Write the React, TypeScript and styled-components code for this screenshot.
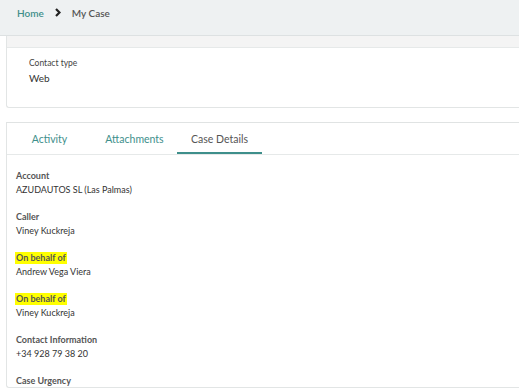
import React from "react";
import styled, { createGlobalStyle } from "styled-components";

const Global = createGlobalStyle`
  html, body { margin: 0; padding: 0; background: #ffffff; overflow: hidden; }
  body { font-family: "Lato", "Noto Sans", sans-serif; color: #333; }
`;

const Page = styled.div`
  width: 519px;
  height: 392px;
  overflow: hidden;
  display: flex;
  flex-direction: column;
`;

const Header = styled.div`
  height: 36px;
  box-sizing: border-box;
  background: #eef1f2;
  border-bottom: 1px solid #dde1e2;
  display: flex;
  align-items: center;
  padding: 0 0 10px 17px;
  gap: 11px;
  font-size: 10px;
  flex-shrink: 0;
`;

const Crumb = styled.span<{ $link?: boolean }>`
  color: ${(p) => (p.$link ? "#3e8f8b" : "#555")};
  font-weight: 600;
`;

const Chevron = styled.svg`
  width: 6px;
  height: 9px;
`;

const Card = styled.div<{ $top?: boolean }>`
  margin-left: 6px;
  width: 600px;
  border-left: 1px solid #e2e5e5;
  border-bottom: 1px solid #e2e5e5;
  border-top: ${(p) => (p.$top ? "1px solid #e0e3e3" : "none")};
  border-radius: 0 0 0 3px;
  background: #fff;
  flex-shrink: 0;
`;

const Strip = styled.div`
  height: 11px;
  background: #f4f4f4;
  border-bottom: 1px solid #e6e9e9;
`;

const CardBody = styled.div`
  height: 59px;
  padding: 9px 0 0 22px;
  box-sizing: border-box;
`;

const SmallLabel = styled.div`
  font-size: 8.5px;
  color: #444;
  line-height: 12px;
`;

const SmallValue = styled.div`
  font-size: 10px;
  color: #333;
  line-height: 12px;
  margin-top: 3px;
`;

const Gap = styled.div`
  height: 14px;
  flex-shrink: 0;
`;

const Tabs = styled.div`
  height: 31px;
  display: flex;
  border-bottom: 1px solid #e6e9e9;
`;

const Tab = styled.div<{ $active?: boolean }>`
  width: 85px;
  display: flex;
  align-items: center;
  justify-content: center;
  font-size: 10.5px;
  color: ${(p) => (p.$active ? "#555" : "#3e8f8b")};
  border-bottom: 2px solid ${(p) => (p.$active ? "#3e8f8b" : "transparent")};
  box-sizing: border-box;
  padding-top: 2px;
`;

const Details = styled.div`
  padding: 15px 0 0 9px;
  display: flex;
  flex-direction: column;
  gap: 15px;
`;

const Field = styled.div`
  display: flex;
  flex-direction: column;
  gap: 2px;
`;

const Label = styled.div<{ $hl?: boolean }>`
  font-size: 9px;
  font-weight: 700;
  color: #555;
  line-height: 12px;
  align-self: flex-start;
  background: ${(p) => (p.$hl ? "#ffff00" : "transparent")};
  padding: 0 1px;
  margin-left: -1px;
`;

const Value = styled.div`
  font-size: 9px;
  color: #333;
  line-height: 12px;
`;

const fields: { label: string; value?: string; hl?: boolean }[] = [
  { label: "Account", value: "AZUDAUTOS SL (Las Palmas)" },
  { label: "Caller", value: "Viney Kuckreja" },
  { label: "On behalf of", value: "Andrew Vega Viera", hl: true },
  { label: "On behalf of", value: "Viney Kuckreja", hl: true },
  { label: "Contact Information", value: "+34 928 79 38 20" },
  { label: "Case Urgency" },
];

export default function App() {
  return (
    <Page>
      <Global />
      <Header>
        <Crumb $link>Home</Crumb>
        <Chevron viewBox="0 0 6 9">
          <path d="M1 1 L4.5 4.5 L1 8" stroke="#222" strokeWidth="2.2" fill="none" />
        </Chevron>
        <Crumb>My Case</Crumb>
      </Header>
      <Card>
        <Strip />
        <CardBody>
          <SmallLabel>Contact type</SmallLabel>
          <SmallValue>Web</SmallValue>
        </CardBody>
      </Card>
      <Gap />
      <Card $top>
        <Tabs>
          <Tab>Activity</Tab>
          <Tab>Attachments</Tab>
          <Tab $active>Case Details</Tab>
        </Tabs>
        <Details>
          {fields.map((f, i) => (
            <Field key={i}>
              <Label $hl={f.hl}>{f.label}</Label>
              {f.value && <Value>{f.value}</Value>}
            </Field>
          ))}
        </Details>
      </Card>
    </Page>
  );
}
